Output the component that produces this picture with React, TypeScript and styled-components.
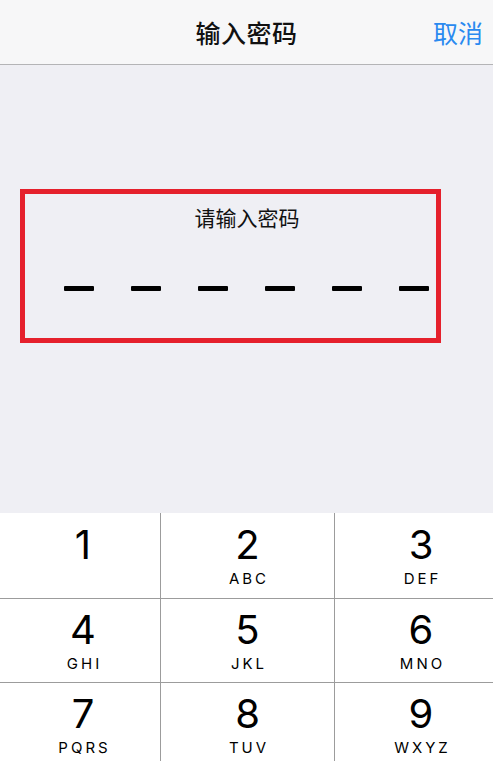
import styled, { createGlobalStyle } from 'styled-components';

const GlobalStyle = createGlobalStyle`
  html, body {
    margin: 0;
    padding: 0;
  }
  body {
    font-family: "Noto Sans CJK SC", "Noto Sans", sans-serif;
    background: #efeff4;
  }
`;

const Screen = styled.div`
  display: flex;
  flex-direction: column;
  width: 493px;
  height: 761px;
  background: #efeff4;
  overflow: hidden;
`;

const NavBar = styled.header`
  position: relative;
  display: flex;
  align-items: center;
  justify-content: center;
  height: 64px;
  background: #f7f7f8;
  border-bottom: 1px solid #b4b4b6;
  flex-shrink: 0;
`;

const NavTitle = styled.h1`
  margin: 0;
  font-size: 25px;
  font-weight: 500;
  color: #111;
  letter-spacing: 0.5px;
`;

const CancelButton = styled.button`
  position: absolute;
  right: 10px;
  top: 50%;
  transform: translateY(-50%);
  border: none;
  background: none;
  padding: 0;
  font-family: inherit;
  font-size: 25px;
  color: #2a8af0;
  cursor: pointer;
`;

const Content = styled.main`
  height: 448px;
  flex-shrink: 0;
  box-sizing: border-box;
  padding-top: 124px;
`;

const PasswordBox = styled.section`
  box-sizing: border-box;
  width: 421px;
  height: 154px;
  margin-left: 20px;
  border: 5px solid #e5202c;
  display: flex;
  flex-direction: column;
`;

const Prompt = styled.div`
  margin-top: 9px;
  padding-left: 33px;
  text-align: center;
  font-size: 21px;
  color: #111;
  line-height: 28px;
`;

const DashRow = styled.div`
  display: flex;
  gap: 37px;
  padding-left: 39px;
  margin-top: 55px;
`;

const Dash = styled.span`
  display: block;
  width: 30px;
  height: 5px;
  border-radius: 1px;
  background: #000;
`;

const Keypad = styled.div`
  display: grid;
  grid-template-columns: 160px 1fr 159px;
  grid-template-rows: 85px 84px 84px;
  background: #fff;
  flex-shrink: 0;
`;

// the reference keypad is slightly off-centre in its outer columns
const colShift = [6, 0, 14];

const Key = styled.button<{ $col: number; $row: number }>`
  display: flex;
  flex-direction: column;
  align-items: center;
  justify-content: flex-start;
  padding: ${(p) => (p.$row > 0 ? 10 : 11)}px 0 0 ${(p) => colShift[p.$col]}px;
  border: none;
  background: #fff;
  border-left: ${(p) => (p.$col > 0 ? '1px solid #9c9c9c' : 'none')};
  border-top: ${(p) => (p.$row > 0 ? '1px solid #9c9c9c' : 'none')};
  font-family: Inter, "Noto Sans", sans-serif;
  color: #000;
  cursor: pointer;
`;

const Digit = styled.span`
  font-size: 40px;
  font-weight: 400;
  line-height: 42px;
`;

const Letters = styled.span`
  margin-top: 4px;
  font-size: 15px;
  font-weight: 400;
  letter-spacing: 3px;
  padding-left: 3px;
  line-height: 18px;
`;

const keys = [
  { d: '1', l: '' },
  { d: '2', l: 'ABC' },
  { d: '3', l: 'DEF' },
  { d: '4', l: 'GHI' },
  { d: '5', l: 'JKL' },
  { d: '6', l: 'MNO' },
  { d: '7', l: 'PQRS' },
  { d: '8', l: 'TUV' },
  { d: '9', l: 'WXYZ' },
];

export default function App() {
  return (
    <>
      <GlobalStyle />
      <Screen>
        <NavBar>
          <NavTitle>输入密码</NavTitle>
          <CancelButton>取消</CancelButton>
        </NavBar>
        <Content>
          <PasswordBox>
            <Prompt>请输入密码</Prompt>
            <DashRow>
              {Array.from({ length: 6 }).map((_, i) => (
                <Dash key={i} />
              ))}
            </DashRow>
          </PasswordBox>
        </Content>
        <Keypad>
          {keys.map((k, i) => (
            <Key key={k.d} $col={i % 3} $row={Math.floor(i / 3)}>
              <Digit>{k.d}</Digit>
              {k.l && <Letters>{k.l}</Letters>}
            </Key>
          ))}
        </Keypad>
      </Screen>
    </>
  );
}
